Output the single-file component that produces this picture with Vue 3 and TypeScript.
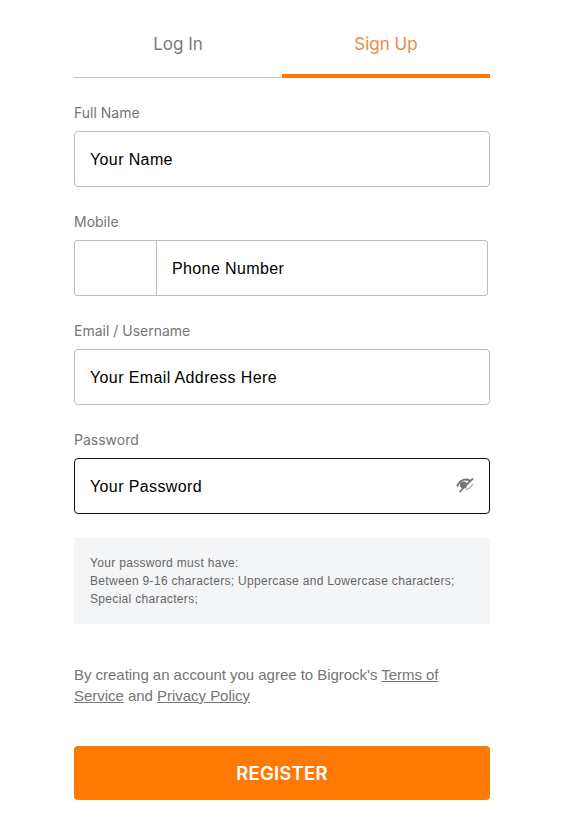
<script setup lang="ts">
const terms = "By creating an account you agree to Bigrock's";
</script>

<template>
  <main class="page">
    <nav class="tabs">
      <a class="tab">Log In</a>
      <a class="tab active">Sign Up</a>
    </nav>

    <form class="form" @submit.prevent>
      <label class="field">
        <span class="label">Full Name</span>
        <input class="input" type="text" placeholder="Your Name" />
      </label>

      <div class="field">
        <span class="label">Mobile</span>
        <div class="phone">
          <div class="code"></div>
          <input class="phone-input" type="tel" placeholder="Phone Number" />
        </div>
      </div>

      <label class="field">
        <span class="label">Email / Username</span>
        <input class="input" type="text" placeholder="Your Email Address Here" />
      </label>

      <label class="field">
        <span class="label">Password</span>
        <span class="password">
          <input class="input focused" type="password" placeholder="Your Password" />
          <svg class="eye" viewBox="0 0 18 18" width="18" height="18" aria-hidden="true">
            <path d="M1.500 9.500C3.500 5.500 6.500 3.500 10 3.500c1.300 0 2.300.2 3.200.7" fill="none" stroke="#757575" stroke-width="2.200" stroke-linecap="round"/>
            <circle cx="7.500" cy="9" r="3.500" fill="#757575"/>
            <path d="M10 13.300c2.800-.2 4.800-1.800 6.500-4.800" fill="none" stroke="#a5a5a5" stroke-width="1.200" stroke-linecap="round"/>
            <path d="M4 15.500C8 11 12 7 16.500 3" fill="none" stroke="#757575" stroke-width="1.800" stroke-linecap="round"/>
          </svg>
        </span>
      </label>

      <div class="note">
        Your password must have:<br />
        Between 9-16 characters; Uppercase and Lowercase characters;<br />
        Special characters;
      </div>

      <p class="terms">
        {{ terms }} <a class="link">Terms of Service</a> and <a class="link">Privacy Policy</a>
      </p>

      <button class="submit" type="submit">REGISTER</button>
    </form>
  </main>
</template>

<style>
html, body { margin: 0; background: #fff; }
</style>

<style scoped>
.page {
  box-sizing: border-box;
  width: 572px;
  height: 837px;
  padding: 21px 82px 0 74px;
  font-family: Inter, "Liberation Sans", sans-serif;
  background: #fff;
}
.tabs {
  display: flex;
  height: 57px;
  box-sizing: border-box;
  border-bottom: 1px solid #c4c4c4;
}
.tab {
  flex: 1;
  text-align: center;
  font-size: 17px;
  line-height: 46px;
  color: #7a7a7a;
  box-sizing: border-box;
  height: 57px;
}
.tab.active {
  color: #ea8a45;
  border-bottom: 4px solid #ff7a05;
}
.form {
  display: flex;
  flex-direction: column;
  padding-top: 26px;
}
.field {
  display: flex;
  flex-direction: column;
  margin-bottom: 26px;
}
.label {
  font-size: 14px;
  line-height: 18px;
  height: 18px;
  margin-bottom: 9px;
  color: #757575;
}
.input,
.phone-input {
  box-sizing: border-box;
  font: 16px "Liberation Sans", Arial, sans-serif;
  letter-spacing: 0.38px;
  color: #000;
  outline: none;
}
.input::placeholder,
.phone-input::placeholder {
  color: #000;
  opacity: 1;
}
.input {
  width: 416px;
  height: 56px;
  padding: 2px 15px 0;
  border: 1px solid #bdbdbd;
  border-radius: 4px;
}
.input.focused {
  border-color: #111;
}
.phone {
  display: flex;
  box-sizing: border-box;
  width: 414px;
  height: 56px;
  border: 1px solid #bdbdbd;
  border-radius: 3px;
}
.code {
  width: 81px;
  border-right: 1px solid #bdbdbd;
}
.phone-input {
  flex: 1;
  min-width: 0;
  padding: 2px 15px 0;
  border: 0;
  background: transparent;
}
.password {
  position: relative;
  display: block;
  height: 56px;
}
.eye {
  position: absolute;
  top: 18px;
  right: 16px;
}
.note {
  box-sizing: border-box;
  width: 416px;
  height: 86px;
  margin-top: -2px;
  padding: 16px;
  background: #f4f5f7;
  color: #666;
  font-family: "Liberation Sans", Arial, sans-serif;
  font-size: 12px;
  letter-spacing: 0.32px;
  line-height: 18px;
}
.terms {
  margin: 40px 0 0;
  font-family: "Liberation Sans", Arial, sans-serif;
  font-size: 15px;
  letter-spacing: -0.03px;
  line-height: 21px;
  color: #757575;
}
.link {
  text-decoration: underline;
}
.submit {
  width: 416px;
  height: 54px;
  margin-top: 40px;
  border: 0;
  border-radius: 4px;
  background: #ff7a05;
  color: #fff;
  font: 600 18.500px Inter, "Liberation Sans", sans-serif;
  letter-spacing: 0.2px;
}
</style>
